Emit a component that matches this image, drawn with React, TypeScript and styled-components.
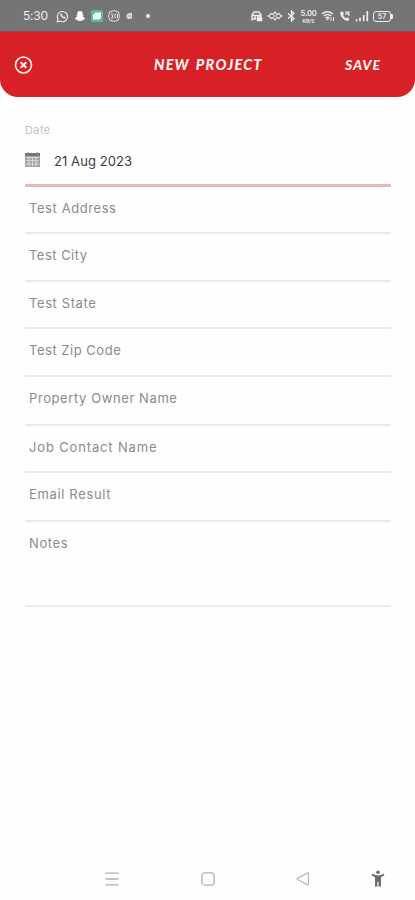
import React from "react";
import styled, { createGlobalStyle } from "styled-components";

const GlobalStyle = createGlobalStyle`
  * { box-sizing: border-box; }
  body { margin: 0; background: #fefefe; }
`;

const Screen = styled.div`
  width: 415px;
  height: 900px;
  display: flex;
  flex-direction: column;
  overflow: hidden;
  background: #fefefe;
  font-family: Inter, "Open Sans", sans-serif;
`;

const StatusBar = styled.div`
  height: 32px;
  flex: none;
  display: flex;
  align-items: center;
  justify-content: space-between;
  padding: 1px 22px 0 23px;
  background: #757575;
  border-bottom: 1px solid #93474a;
  color: #eee;
`;

const StatusGroup = styled.div<{ $gap: number }>`
  display: flex;
  align-items: center;
  gap: ${(p) => p.$gap}px;
  svg { display: block; flex: none; }
`;

const Clock = styled.span`
  width: 27px;
  font-size: 12px;
  line-height: 16px;
  letter-spacing: -0.2px;
  margin-right: 1px;
  white-space: nowrap;
`;

const NetSpeed = styled.span`
  display: flex;
  flex-direction: column;
  align-items: center;
  width: 17px;
  font-size: 7.5px;
  line-height: 9px;
  font-weight: 600;
  letter-spacing: -0.2px;
`;

const NetUnit = styled.span`
  font-size: 5px;
  line-height: 6px;
  letter-spacing: 0;
`;

const Battery = styled.span`
  display: flex;
  align-items: center;
  &::after { content: ""; width: 2px; height: 5px; background: #eee; border-radius: 0 1px 1px 0; }
`;

const BatteryBody = styled.span`
  width: 18px;
  height: 11px;
  border: 1px solid #eee;
  border-radius: 3px;
  font-size: 7px;
  line-height: 9px;
  font-weight: 600;
  text-align: center;
`;

const Header = styled.header`
  height: 65px;
  flex: none;
  display: grid;
  grid-template-columns: 150px 1fr 150px;
  align-items: center;
  background: #d82126;
  border-radius: 0 0 18px 18px;
  color: #fff2ef;
`;

const CloseButton = styled.button`
  display: flex;
  width: 20px;
  height: 20px;
  margin-left: 14px;
  padding: 0;
  border: 0;
  background: none;
  color: inherit;
`;

const HeaderText = styled.span<{ $size: number; $spacing: number; $word?: number }>`
  font-family: Lato, sans-serif;
  font-weight: 900;
  font-style: italic;
  font-size: ${(p) => p.$size}px;
  letter-spacing: ${(p) => p.$spacing}px;
  word-spacing: ${(p) => p.$word ?? 0}px;
  line-height: 20px;
  white-space: nowrap;
`;

const Title = styled(HeaderText)`
  margin-left: 4px;
`;

const Save = styled(HeaderText)`
  margin-left: 80px;
`;

const Form = styled.main`
  flex: 1;
  display: flex;
  flex-direction: column;
  padding: 26px 24px 0 25px;
`;

const DateLabel = styled.div`
  height: 15px;
  font-size: 11px;
  line-height: 14px;
  letter-spacing: 0.4px;
  color: #c2c2c2;
`;

const DateField = styled.div`
  height: 49px;
  display: flex;
  align-items: flex-start;
  padding-top: 14px;
  border-bottom: 3px solid #e4b9b6;
`;

const DateValue = styled.span`
  margin-left: 14px;
  font-size: 13px;
  line-height: 18px;
  color: #3d3d3d;
  letter-spacing: 0.08px;
`;

const Field = styled.div<{ $height: number; $spacing: number }>`
  height: ${(p) => p.$height}px;
  flex: none;
  padding: 12px 4px 0;
  border-bottom: 2px solid #ebebeb;
  font-size: 13px;
  line-height: 19px;
  letter-spacing: ${(p) => p.$spacing}px;
  color: #8b8b8b;
  white-space: nowrap;
`;

const NavBar = styled.nav`
  height: 43px;
  flex: none;
  display: grid;
  grid-template-columns: 64px 96px 95px 96px 54px;
  align-items: center;
  justify-items: center;
  svg { display: block; }
`;

const WhatsApp = () => (
  <svg width="13" height="13" viewBox="0 0 13 13" fill="none" stroke="#eee" strokeWidth="1.1">
    <path d="M1.2 11.8 1.9 9A5.1 5.1 0 1 1 4 11.1Z" />
    <path d="M4.4 4.1c-.2 2 2.4 4.6 4.4 4.4l.5-1.2-1.3-.8-.8.6L5.8 5.7l.5-.7-.8-1.3Z" fill="#eee" strokeWidth=".3" />
  </svg>
);

const Snapchat = () => (
  <svg width="12" height="12" viewBox="0 0 12 12" fill="#fff">
    <path d="M6 1C4.1 1 3.2 2.3 3.3 4v1l-1.1.2c0 .5.8.6.8 1.1C2.6 7.4 1.7 8 .8 8.4c.2.7 1.1.8 1.8 1l.3.8c1.3-.2 1.9.9 3.1.9s1.8-1.1 3.1-.9l.3-.8c.7-.2 1.6-.3 1.8-1-.9-.4-1.8-1-2.2-2.1 0-.5.8-.6.8-1.1L8.7 5V4C8.8 2.3 7.9 1 6 1Z" />
  </svg>
);

const GreenApp = () => (
  <svg width="12" height="12" viewBox="0 0 12 12">
    <rect width="12" height="12" rx="2" fill="#58bd99" />
    <path d="M3 4 4.5 2.5H10V8L8.2 9.5H2V5Z" fill="#f4fff9" />
  </svg>
);

const RoundApp = () => (
  <svg width="12" height="12" viewBox="0 0 12 12" fill="none" stroke="#e5e5e5">
    <rect x=".8" y=".8" width="10.4" height="10.4" rx="4" />
    <path d="M3 4q1.5-1 2 .5L4 6l1 1q0 2-2 1M8 3.5 6.5 6 8 8.5M9.5 4v4" />
  </svg>
);

const SmallApp = () => (
  <svg width="8" height="8" viewBox="0 0 8 8" fill="#d9d9d9">
    <path d="M2 2 5 .8 7 1v5L6 7H2.5L1.5 5Z" />
    <path d="M4 3v2m1.5-2v2" stroke="#999" strokeWidth=".6" />
  </svg>
);

const Dot = () => (
  <svg width="4" height="4" viewBox="0 0 4 4"><circle cx="2" cy="2" r="1.9" fill="#fff" /></svg>
);

const CarLock = () => (
  <svg width="12" height="12" viewBox="0 0 12 12" fill="none" stroke="#eee" strokeWidth="1.4">
    <path d="M1 10.5V5l2-3h5l2 3v1M1 5.5h9M1 9h4" />
    <rect x="6" y="7.5" width="5" height="3.5" fill="#eee" strokeWidth=".5" />
    <path d="M7 7.5V6h3v1.5M3 7.2h2" />
  </svg>
);

const Vibrate = () => (
  <svg width="16" height="12" viewBox="0 0 16 12" fill="none" stroke="#eee" strokeWidth="1.2">
    <path d="M0 6h2l2-2.5 2 1L8 2l2 2.5 2-1L14 6h2M2 6l2 2.5 2-1 2 2.5 2-2.5 2 1L14 6" />
    <path d="M6.5 6h3" />
  </svg>
);

const Bluetooth = () => (
  <svg width="9" height="12" viewBox="0 0 9 12" fill="none" stroke="#eee" strokeWidth="1.3">
    <path d="m1 3.5 6 5L4.5 11V1L7 3.5l-6 5" />
  </svg>
);

const Wifi = () => (
  <svg width="14" height="12" viewBox="0 0 14 12" fill="none" stroke="#eee" strokeWidth="1.5">
    <path d="M1 4q5.5-4.5 11 0M2.8 6q3.7-3 7.4 0M4.7 7.9q1.8-1.4 3.6 0" />
    <path d="m5.2 8.7 1.3 1.6 1.3-1.6Z" fill="#eee" strokeWidth=".5" />
    <path d="M10 7.5v3.5M12.5 7v4" strokeWidth="1" />
  </svg>
);

const Call = () => (
  <svg width="12" height="12" viewBox="0 0 12 12" fill="none" stroke="#eee" strokeWidth="1.2">
    <path d="M1.5 2C1 6 4.5 10.3 9.2 10.8L10 8.7 7.8 7.5l-1 1Q4.5 7 3.8 5l1-.9L3.7 1.7Z" fill="#eee" strokeWidth=".4" />
    <path d="M6 2h2v2H6M11 2H9.5v3H11" />
  </svg>
);

const Signal = () => (
  <svg width="14" height="12" viewBox="0 0 14 12" stroke="#eee" strokeWidth="1.7">
    <path d="M1.5 9.3v2M5 7.8v3.5M8.7 5v6.3M12.3 1v10.3" />
  </svg>
);

const CloseIcon = () => (
  <svg width="20" height="20" viewBox="0 0 20 20" fill="none" stroke="currentColor">
    <circle cx="9.5" cy="10" r="8" strokeWidth="1.6" />
    <path d="m6.7 7.2 5.6 5.6m0-5.6-5.6 5.6" strokeWidth="2" />
  </svg>
);

const CalendarIcon = () => (
  <svg width="15" height="15" viewBox="0 0 15 15">
    <path d="M0 1h15v14H0Z" fill="#a5a5a5" />
    <path d="M0 1h15v3H0Z" fill="#777" />
    <path d="M3 0v3m9-3v3" stroke="#888" />
    <path d="M1 5.5h13M1 8.7h13M1 12h13M4 5v9m3.5-9v9M11 5v9" stroke="#e3e3e3" strokeWidth=".8" />
  </svg>
);

const MenuIcon = () => (
  <svg width="14" height="14" viewBox="0 0 14 14" stroke="#b0b0b0" strokeWidth="1.3">
    <path d="M.5 1.2h13M.5 7h13M.5 12.8h13" />
  </svg>
);

const HomeIcon = () => (
  <svg width="14" height="14" viewBox="0 0 14 14" fill="none" stroke="#b0b0b0" strokeWidth="1.3">
    <rect x=".9" y=".9" width="12.2" height="12.2" rx="3.2" />
  </svg>
);

const BackIcon = () => (
  <svg width="14" height="14" viewBox="0 0 14 14" fill="none" stroke="#b0b0b0" strokeWidth="1.1" strokeLinejoin="round">
    <path d="M1.4 6.5 11.6 1q.8-.2.8.6v10.8q0 .7-.8.4L1.4 7.5q-.5-.5 0-1Z" />
  </svg>
);

const AccessibilityIcon = () => (
  <svg width="14" height="17" viewBox="0 0 14 17" fill="#6c6c6c">
    <circle cx="7" cy="2.3" r="1.8" />
    <path d="M1.3 3.8 5 5.2h4l3.7-1.4.8 1.4-3.5 2V16.5H7.6V12H6.4v4.5H4V7.2L.5 5.2Z" />
  </svg>
);

const fields = [
  { label: "Test Address", height: 47, spacing: 0.58 },
  { label: "Test City", height: 48, spacing: 0.48 },
  { label: "Test State", height: 47, spacing: 0.6 },
  { label: "Test Zip Code", height: 48, spacing: 0.52 },
  { label: "Property Owner Name", height: 49, spacing: 0.59 },
  { label: "Job Contact Name", height: 47, spacing: 0.85 },
  { label: "Email Result", height: 49, spacing: 0.65 },
  { label: "Notes", height: 85, spacing: 0.6 },
];

export default function App() {
  return (
    <Screen>
      <GlobalStyle />
      <StatusBar>
        <StatusGroup $gap={5}>
          <Clock>5:30</Clock>
          <WhatsApp />
          <Snapchat />
          <GreenApp />
          <RoundApp />
          <StatusGroup $gap={13}>
            <SmallApp />
            <Dot />
          </StatusGroup>
        </StatusGroup>
        <StatusGroup $gap={4}>
          <CarLock />
          <Vibrate />
          <Bluetooth />
          <NetSpeed>5.00<NetUnit>KB/S</NetUnit></NetSpeed>
          <Wifi />
          <Call />
          <Signal />
          <Battery><BatteryBody>57</BatteryBody></Battery>
        </StatusGroup>
      </StatusBar>
      <Header>
        <CloseButton aria-label="Close"><CloseIcon /></CloseButton>
        <Title $size={14.5} $spacing={1.2} $word={2}>NEW PROJECT</Title>
        <Save $size={14} $spacing={0.95}>SAVE</Save>
      </Header>
      <Form>
        <DateLabel>Date</DateLabel>
        <DateField>
          <CalendarIcon />
          <DateValue>21 Aug 2023</DateValue>
        </DateField>
        {fields.map((f) => (
          <Field key={f.label} $height={f.height} $spacing={f.spacing}>{f.label}</Field>
        ))}
      </Form>
      <NavBar>
        <span />
        <MenuIcon />
        <HomeIcon />
        <BackIcon />
        <AccessibilityIcon />
      </NavBar>
    </Screen>
  );
}
